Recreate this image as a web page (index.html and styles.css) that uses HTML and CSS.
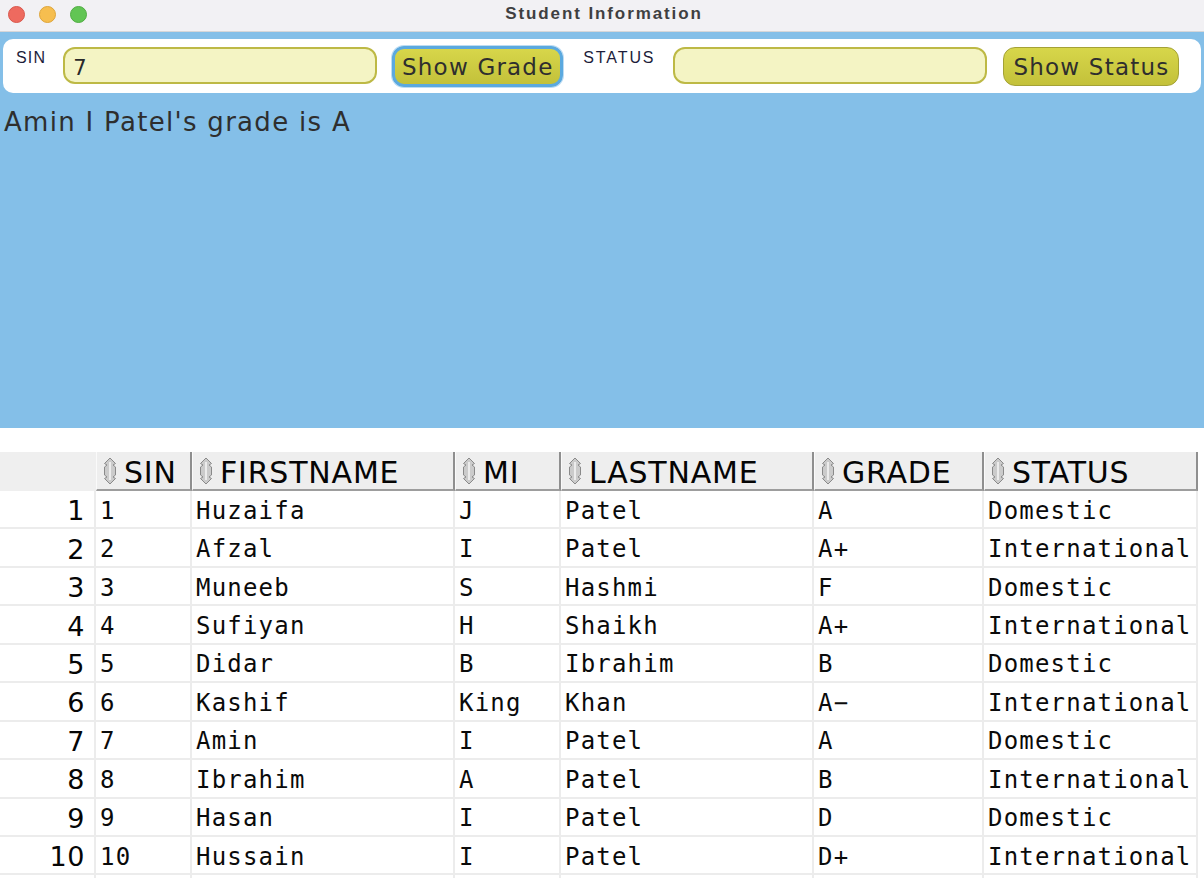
FILE: index.html
```html
<!DOCTYPE html>
<html lang="en">
<head>
<meta charset="utf-8">
<title>Student Information</title>
<link rel="stylesheet" href="styles.css">
</head>
<body>
<div class="window">
  <header class="titlebar">
    <div class="lights">
      <span class="light red"></span>
      <span class="light yellow"></span>
      <span class="light green"></span>
    </div>
    <div class="title">Student Information</div>
  </header>

  <section class="stage">
    <div class="toolbar">
      <label class="field-label sin-label" for="sin">SIN</label>
      <input class="field sin-field" id="sin" type="text" value="7">
      <button class="btn btn-focus" type="button">Show Grade</button>
      <label class="field-label status-label" for="status">STATUS</label>
      <input class="field status-field" id="status" type="text" value="">
      <button class="btn btn-status" type="button">Show Status</button>
    </div>
    <p class="message">Amin I Patel's grade is A</p>
  </section>

  <section class="grid-wrap">
    <div class="row head">
      <div class="corner"></div>
      <div class="hcell"><svg class="sort" viewBox="0 0 14 28"><path d="M7 1 L12.5 6.5 L10 8 L12.5 10 L12.5 18 L10 20 L12.5 21.5 L7 27 L1.5 21.5 L4 20 L1.5 18 L1.5 10 L4 8 L1.5 6.5 Z"/><path class="sort-core" d="M7 5 L7 23"/></svg><span>SIN</span></div>
      <div class="hcell"><svg class="sort" viewBox="0 0 14 28"><path d="M7 1 L12.5 6.5 L10 8 L12.5 10 L12.5 18 L10 20 L12.5 21.5 L7 27 L1.5 21.5 L4 20 L1.5 18 L1.5 10 L4 8 L1.5 6.5 Z"/><path class="sort-core" d="M7 5 L7 23"/></svg><span>FIRSTNAME</span></div>
      <div class="hcell"><svg class="sort" viewBox="0 0 14 28"><path d="M7 1 L12.5 6.5 L10 8 L12.5 10 L12.5 18 L10 20 L12.5 21.5 L7 27 L1.5 21.5 L4 20 L1.5 18 L1.5 10 L4 8 L1.5 6.5 Z"/><path class="sort-core" d="M7 5 L7 23"/></svg><span>MI</span></div>
      <div class="hcell"><svg class="sort" viewBox="0 0 14 28"><path d="M7 1 L12.5 6.5 L10 8 L12.5 10 L12.5 18 L10 20 L12.5 21.5 L7 27 L1.5 21.5 L4 20 L1.5 18 L1.5 10 L4 8 L1.5 6.5 Z"/><path class="sort-core" d="M7 5 L7 23"/></svg><span>LASTNAME</span></div>
      <div class="hcell"><svg class="sort" viewBox="0 0 14 28"><path d="M7 1 L12.5 6.5 L10 8 L12.5 10 L12.5 18 L10 20 L12.5 21.5 L7 27 L1.5 21.5 L4 20 L1.5 18 L1.5 10 L4 8 L1.5 6.5 Z"/><path class="sort-core" d="M7 5 L7 23"/></svg><span>GRADE</span></div>
      <div class="hcell"><svg class="sort" viewBox="0 0 14 28"><path d="M7 1 L12.5 6.5 L10 8 L12.5 10 L12.5 18 L10 20 L12.5 21.5 L7 27 L1.5 21.5 L4 20 L1.5 18 L1.5 10 L4 8 L1.5 6.5 Z"/><path class="sort-core" d="M7 5 L7 23"/></svg><span>STATUS</span></div>
    </div>

    <div class="row"><div class="num">1</div><div class="cell">1</div><div class="cell">Huzaifa</div><div class="cell">J</div><div class="cell">Patel</div><div class="cell">A</div><div class="cell">Domestic</div></div>
    <div class="row"><div class="num">2</div><div class="cell">2</div><div class="cell">Afzal</div><div class="cell">I</div><div class="cell">Patel</div><div class="cell">A+</div><div class="cell">International</div></div>
    <div class="row"><div class="num">3</div><div class="cell">3</div><div class="cell">Muneeb</div><div class="cell">S</div><div class="cell">Hashmi</div><div class="cell">F</div><div class="cell">Domestic</div></div>
    <div class="row"><div class="num">4</div><div class="cell">4</div><div class="cell">Sufiyan</div><div class="cell">H</div><div class="cell">Shaikh</div><div class="cell">A+</div><div class="cell">International</div></div>
    <div class="row"><div class="num">5</div><div class="cell">5</div><div class="cell">Didar</div><div class="cell">B</div><div class="cell">Ibrahim</div><div class="cell">B</div><div class="cell">Domestic</div></div>
    <div class="row"><div class="num">6</div><div class="cell">6</div><div class="cell">Kashif</div><div class="cell">King</div><div class="cell">Khan</div><div class="cell">A&minus;</div><div class="cell">International</div></div>
    <div class="row"><div class="num">7</div><div class="cell">7</div><div class="cell">Amin</div><div class="cell">I</div><div class="cell">Patel</div><div class="cell">A</div><div class="cell">Domestic</div></div>
    <div class="row"><div class="num">8</div><div class="cell">8</div><div class="cell">Ibrahim</div><div class="cell">A</div><div class="cell">Patel</div><div class="cell">B</div><div class="cell">International</div></div>
    <div class="row"><div class="num">9</div><div class="cell">9</div><div class="cell">Hasan</div><div class="cell">I</div><div class="cell">Patel</div><div class="cell">D</div><div class="cell">Domestic</div></div>
    <div class="row"><div class="num">10</div><div class="cell">10</div><div class="cell">Hussain</div><div class="cell">I</div><div class="cell">Patel</div><div class="cell">D+</div><div class="cell">International</div></div>
    <div class="row"><div class="num"></div><div class="cell"></div><div class="cell"></div><div class="cell"></div><div class="cell"></div><div class="cell"></div><div class="cell"></div></div>
  </section>
</div>
</body>
</html>
```

FILE: styles.css
```css
* { box-sizing: border-box; }

html, body {
  margin: 0;
  padding: 0;
  background: #ffffff;
  width: 1204px;
  height: 878px;
  overflow: hidden;
}

.window {
  width: 1204px;
  height: 878px;
  overflow: hidden;
  font-family: "DejaVu Sans", Verdana, sans-serif;
}

/* ---------- title bar ---------- */
.titlebar {
  height: 32px;
  background: #f2f1f4;
  border-bottom: 1px solid #d6d6d8;
  display: flex;
  align-items: center;
}

.lights {
  display: flex;
  gap: 14px;
  padding-left: 8px;
  padding-bottom: 2px;
}

.light {
  width: 17px;
  height: 17px;
  border-radius: 50%;
  display: block;
}
.light.red { background: #ee6a5f; border: 1px solid #d9574c; }
.light.yellow { background: #f6be4f; border: 1px solid #dea53a; }
.light.green { background: #62c554; border: 1px solid #50ad42; }

.title {
  flex: 1;
  text-align: center;
  margin-left: -83px;
  padding-bottom: 3px;
  font-family: "Liberation Sans", Arial, sans-serif;
  font-weight: bold;
  font-size: 17px;
  letter-spacing: 1.9px;
  color: #3f3f41;
}

/* ---------- blue stage ---------- */
.stage {
  height: 396px;
  background: #84bfe8;
  padding: 7px 3px 0 3px;
}

.toolbar {
  height: 54px;
  background: #ffffff;
  border-radius: 10px;
  display: flex;
  align-items: flex-start;
  padding-left: 13px;
}

.field-label {
  font-family: "Liberation Sans", Arial, sans-serif;
  font-size: 16px;
  line-height: 18px;
  letter-spacing: 1.2px;
  color: #1d1d3a;
  margin-top: 10px;
}

.field {
  width: 314px;
  height: 37px;
  margin-top: 8px;
  background: #f4f4c4;
  border: 2px solid #bdb945;
  border-radius: 12px;
  padding: 4px 8px 0 8px;
  font-family: "DejaVu Sans", Verdana, sans-serif;
  font-size: 21px;
  color: #2a2a2a;
  outline: none;
}

.sin-field { margin-left: 17px; }
.status-field { margin-left: 18px; }

.btn {
  font-family: "DejaVu Sans", Verdana, sans-serif;
  font-size: 23px;
  letter-spacing: 1.2px;
  color: #2e2e2e;
  background: linear-gradient(#d7d64a, #c3c13a);
  border-radius: 12px;
  padding: 2px 0 0 0;
  line-height: 1;
}

.btn-focus {
  width: 171px;
  height: 41px;
  margin-top: 7px;
  margin-left: 15px;
  border: 3px solid #5ba9df;
  box-shadow: 0 0 0 1px #bcdcf3;
}

.status-label {
  margin-left: 20px;
  letter-spacing: 1.9px;
}

.btn-status {
  width: 176px;
  height: 39px;
  margin-top: 8px;
  margin-left: 16px;
  border: 1px solid #a4a236;
}

.message {
  margin: 14px 0 0 1px;
  font-family: "DejaVu Sans", Verdana, sans-serif;
  font-size: 26px;
  line-height: 30px;
  letter-spacing: 1.3px;
  color: #2e2e2e;
}

/* ---------- data grid ---------- */
.grid-wrap {
  padding-top: 24px;
}

.row {
  display: grid;
  grid-template-columns: 96px 96px 263px 106px 253px 170px 214px;
  height: 38.45px;
}

.row.head {
  height: 39px;
}

.corner {
  background: #efefef;
}

.hcell {
  background: #eeeeee;
  border-left: 1px solid #fafafa;
  border-right: 2px solid #8f8f8f;
  border-bottom: 2px solid #9d9d9d;
  display: flex;
  align-items: center;
  padding: 4px 0 0 6px;
  font-family: "DejaVu Sans", Verdana, sans-serif;
  font-size: 30px;
  letter-spacing: 0.8px;
  color: #050505;
  white-space: nowrap;
  overflow: hidden;
}

.sort {
  width: 14px;
  height: 28px;
  flex: none;
  margin-right: 7px;
  margin-top: -4px;
}
.sort path {
  fill: #cbcbcb;
  stroke: #8a8a8a;
  stroke-width: 1;
  stroke-linejoin: round;
}
.sort path.sort-core {
  fill: none;
  stroke: #ececec;
  stroke-width: 2;
}

.num {
  border-right: 2px solid #ececec;
  border-bottom: 2px solid #ececec;
  padding: 3px 9px 0 0;
  display: flex;
  align-items: center;
  justify-content: flex-end;
  font-family: "DejaVu Sans", Verdana, sans-serif;
  font-size: 27px;
  letter-spacing: 0.6px;
  color: #050505;
}

.cell {
  border-right: 2px solid #ececec;
  border-bottom: 2px solid #ececec;
  display: flex;
  align-items: center;
  padding: 3px 0 0 4px;
  font-family: "DejaVu Sans Mono", "Liberation Mono", monospace;
  font-size: 24px;
  letter-spacing: 1.2px;
  color: #0a0a0a;
  white-space: nowrap;
  overflow: hidden;
}
```
